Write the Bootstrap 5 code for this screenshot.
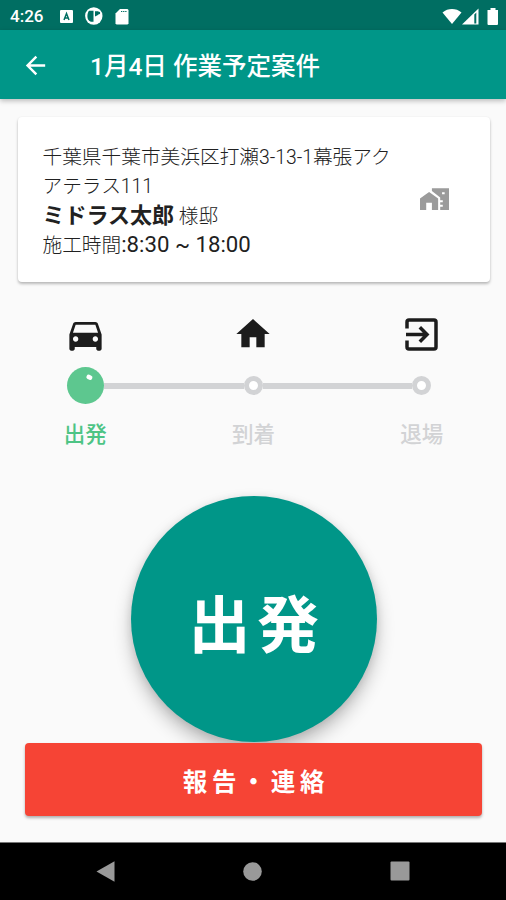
<!DOCTYPE html>
<html lang="ja">
<head>
<meta charset="utf-8">
<meta name="viewport" content="width=device-width, initial-scale=1">
<title>作業予定案件</title>
<link rel="stylesheet" href="https://cdn.jsdelivr.net/npm/bootstrap@5.3.0/dist/css/bootstrap.min.css">
<style>
  body { font-family: Roboto, "Noto Sans CJK JP", sans-serif; background: #fafafa; color: #212121; }
  svg { display: block; flex: none; }
  .screen { height: 900px; overflow: hidden; }
  .status-bar { height: 30px; background: #006e62; padding: 2px 7px 0 10px; }
  .clock { font-size: 17px; font-weight: 500; line-height: 28px; width: 50px; }
  .app-bar { height: 68.5px; background: #009688; padding: 3px 21px 0; box-shadow: 0 2px 5px rgba(0,0,0,.25); }
  .app-title { font-size: 24.5px; font-weight: 500; line-height: 36px; margin: 3px 0 0 40px; }
  .job-card { margin: 18px 16.5px 0 17.5px; height: 165px; padding: 26px 41px 0 25px; border-radius: 4px; box-shadow: 0 2px 3px rgba(0,0,0,.26), 0 0 2px rgba(0,0,0,.06); }
  .job-text { font-size: 19.7px; font-weight: 300; width: 356px; }
  .job-text div { height: 29.2px; line-height: 29.2px; }
  .job-text .customer { font-size: 22px; font-weight: 700; }
  .job-text .hours { font-size: 22.2px; font-weight: 400; }
  .job-text .num { font-size: 19.3px; }
  .job-icon { margin-top: 45px; }
  .steps { height: 142px; margin-top: 32px; padding-left: 1px; }
  .step { width: 168.7px; }
  .step-icon { height: 41px; }
  .track { height: 42px; margin-top: 10px; }
  .rail { height: 6px; background: #d2d3d5; }
  .dot { width: 19px; height: 19px; border: 5px solid #d2d3d5; background: #fff; }
  .dot-now { width: 37px; height: 37px; background: #5dc78f; }
  .step-label { font-size: 21.5px; font-weight: 500; line-height: 32px; margin-top: 12px; color: #d2d3d5; }
  .step-label.now { color: #4dc485; }
  .depart { width: 246px; height: 246px; margin: 40.5px 0 0 1px; background: #009688; font-size: 62px; font-weight: 700; letter-spacing: 6.5px; line-height: 90px; padding: 15px 0 0 7px; box-shadow: 0 10px 18px rgba(0,0,0,.24), 0 2px 9px rgba(0,0,0,.1); }
  .report { height: 73.5px; margin: .5px 24px 0 25px; background: #f64435; font-size: 24.5px; font-weight: 700; letter-spacing: 4.8px; border-radius: 4px; padding: 8px 0 0 5px; box-shadow: 0 2px 3px rgba(0,0,0,.3); z-index: 1; }
  .nav-keys { height: 58.5px; background: #000; border-top: 1px solid #777; padding: 0 96px; }
</style>
</head>
<body>
<div class="screen d-flex flex-column">
  <div class="status-bar d-flex align-items-center text-white flex-shrink-0">
    <span class="clock">4:26</span>
    <svg width="13" height="13" viewBox="0 0 13 13"><rect width="13" height="13" rx="1" fill="#fff"/><path d="M4 10 6.5 3.5 9 10M5 8H8" fill="none" stroke="#006e62" stroke-width="1.5"/></svg>
    <svg class="ms-2" width="26" height="18" viewBox="0 0 26 18"><circle cx="12.8" cy="9" r="8.7" fill="#fff"/><path d="M8 3.800h4.500v11h-2.500c-2.500-1-3.600-3-3.600-5.400 0-2.200.6-4.300 1.600-5.600z" fill="#006e62"/><path d="M14 4.200h3.500v3.600L14 9.500z" fill="#006e62"/><circle cx="18" cy="6" r="1.200" fill="#006e62"/></svg>
    <svg class="ms-2" width="14" height="17" viewBox="0 0 14 17"><path d="M5 1h7.500L13.500 2v13.500L12.500 16.500h-11L.5 15.500V5.500z" fill="#fff"/><path d="M6 3.500h5.500" stroke="#006e62" stroke-width="1" stroke-dasharray="1.300 .8"/></svg>
    <div class="ms-auto d-flex align-items-center">
      <svg width="20" height="17" viewBox="0 0 20 17"><path d="M.5 4.500C6-.1 14-.1 19.500 4.500L10 16z" fill="#fff"/></svg>
      <svg width="17" height="17" viewBox="0 0 17 17"><path d="M0 16.500 16.500.5v16z" fill="#fff"/><path d="M12.300 6.500v9h2V4.500z" fill="#006e62"/></svg>
      <svg class="ms-2" width="12" height="17" viewBox="0 0 12 17"><path d="M3.500 0h5v2H11v14a1 1 0 0 1-1 1H1.500a1 1 0 0 1-1-1V2h3z" fill="#fff"/></svg>
    </div>
  </div>
  <header class="app-bar d-flex align-items-center text-white flex-shrink-0">
    <svg width="29" height="29" viewBox="0 0 24 24" fill="#fff"><path d="M20 11H7.830l5.590-5.590L12 4l-8 8 8 8 1.410-1.410L7.830 13H20v-2z"/></svg>
    <span class="app-title text-nowrap">1月4日 作業予定案件</span>
  </header>

  <section class="job-card bg-white d-flex justify-content-between flex-shrink-0">
    <div class="job-text text-nowrap">
      <div>千葉県千葉市美浜区打瀬<span class="num">3-13-1</span>幕張アク</div>
      <div>アテラス<span class="num">111</span></div>
      <div><span class="customer">ミドラス太郎</span> 様邸</div>
      <div>施工時間<span class="hours">:8:30 ~ 18:00</span></div>
    </div>
    <svg class="job-icon" width="29" height="22" viewBox="0 0 28 21" fill="#9b9b9b"><path fill-rule="evenodd" d="M0 21V10L8.800 3.800l8.700 6.200v11H11.500v-7H6v7zM11.500 0H28v21h-8.500v-3H22v-2h-2.500v-2.300H22v-2h-2.500V9L11.500 2.800zM21.300 4v2h2.500V4z"/></svg>
  </section>

  <section class="steps d-flex justify-content-center flex-shrink-0">
    <div class="step d-flex flex-column align-items-center">
      <div class="step-icon d-flex align-items-center"><svg width="43" height="43" viewBox="0 0 24 24" fill="#1c1c1c"><path d="M18.920 6.010C18.720 5.420 18.160 5 17.500 5h-11c-.66 0-1.210.42-1.420 1.010L3 12v8c0 .55.45 1 1 1h1c.55 0 1-.45 1-1v-1h12v1c0 .55.45 1 1 1h1c.55 0 1-.45 1-1v-8l-2.080-5.990zM6.500 16c-.83 0-1.500-.67-1.500-1.500S5.670 13 6.500 13s1.500.67 1.500 1.500S7.330 16 6.500 16zm11 0c-.83 0-1.500-.67-1.500-1.500s.67-1.500 1.500-1.500 1.500.67 1.500 1.500-.67 1.500-1.500 1.500zM5 11l1.500-4.500h11L19 11H5z"/></svg></div>
      <div class="track d-flex align-items-center w-100">
        <div class="flex-fill w-50"></div>
        <div class="dot-now rounded-circle flex-shrink-0"><svg width="37" height="37"><rect x="19.500" y="7.800" width="6" height="4.600" rx="2" fill="#fff" transform="rotate(25 22 10)"/></svg></div>
        <div class="rail flex-fill w-50"></div>
      </div>
      <div class="step-label now">出発</div>
    </div>
    <div class="step d-flex flex-column align-items-center">
      <div class="step-icon d-flex align-items-center"><svg width="40" height="40" viewBox="0 0 24 24" fill="#1c1c1c"><path d="M10 20v-6h4v6h5v-8h3L12 3 2 12h3v8z"/></svg></div>
      <div class="track d-flex align-items-center w-100">
        <div class="rail flex-fill w-50"></div>
        <div class="dot rounded-circle flex-shrink-0"></div>
        <div class="rail flex-fill w-50"></div>
      </div>
      <div class="step-label">到着</div>
    </div>
    <div class="step d-flex flex-column align-items-center">
      <div class="step-icon d-flex align-items-center"><svg width="33" height="33" viewBox="0 0 33 33" fill="none" stroke="#1c1c1c" stroke-width="3.500"><path d="M2 10.500V4Q2 2 4 2H29Q31 2 31 4V29Q31 31 29 31H4Q2 31 2 29V22.500M1 16.500H22M14.800 9.300 22 16.500 14.800 23.700"/></svg></div>
      <div class="track d-flex align-items-center w-100">
        <div class="rail flex-fill w-50"></div>
        <div class="dot rounded-circle flex-shrink-0"></div>
        <div class="flex-fill w-50"></div>
      </div>
      <div class="step-label">退場</div>
    </div>
  </section>

  <button type="button" class="depart border-0 rounded-circle text-white align-self-center flex-shrink-0 text-nowrap">出発</button>
  <button type="button" class="report position-relative border-0 text-white flex-shrink-0">報告・連絡</button>

  <nav class="nav-keys d-flex align-items-center justify-content-between mt-auto flex-shrink-0">
    <svg width="19" height="21" viewBox="0 0 19 21"><path d="M.5 10.500 18.500.3v20.400z" fill="#999"/></svg>
    <svg width="19" height="19" viewBox="0 0 19 19"><circle cx="9.500" cy="9.500" r="9.300" fill="#999"/></svg>
    <svg width="20" height="20" viewBox="0 0 20 20"><rect x=".5" y=".5" width="19" height="19" rx="1" fill="#999"/></svg>
  </nav>
</div>
<script src="https://cdn.jsdelivr.net/npm/bootstrap@5.3.0/dist/js/bootstrap.bundle.min.js"></script>
</body>
</html>
